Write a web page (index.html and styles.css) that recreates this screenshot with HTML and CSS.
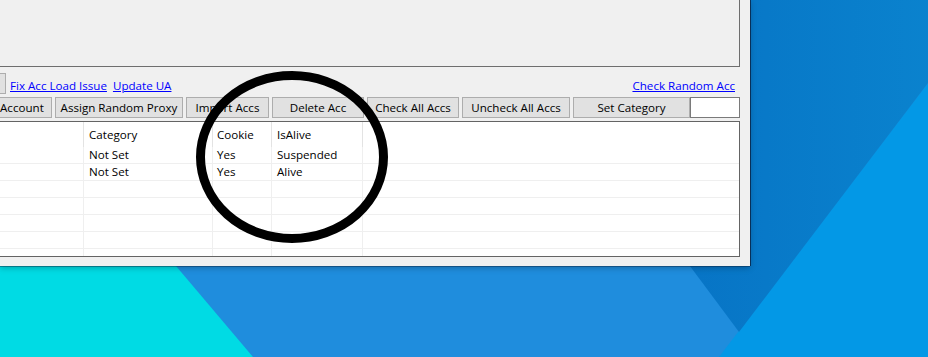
FILE: index.html
```html
<!DOCTYPE html>
<html lang="en">
<head>
<meta charset="utf-8">
<title>Accounts</title>
<link rel="stylesheet" href="styles.css">
</head>
<body>
<div class="desktop">
  <svg class="wallpaper" width="928" height="357" viewBox="0 0 928 357" aria-hidden="true">
    <defs>
      <linearGradient id="band" x1="0" y1="0" x2="1" y2="0">
        <stop offset="0" stop-color="#0568c0"/>
        <stop offset="0.55" stop-color="#0879c8"/>
        <stop offset="1" stop-color="#0b86d0"/>
      </linearGradient>
    </defs>
    <rect x="0" y="0" width="928" height="357" fill="#1f8ddd"/>
    <polygon points="0,58 253,357 0,357" fill="#00dbe4"/>
    <polygon points="928,83 928,357 719,357" fill="#0398e6"/>
    <polygon points="492,0 991,0 739,332" fill="url(#band)"/>
  </svg>

  <div class="window">
    <div class="panel"></div>

    <div class="link-row">
      <button class="btn stub" type="button"></button>
      <a class="link first-link" href="#">Fix Acc Load Issue</a>
      <a class="link" href="#">Update UA</a>
      <a class="link right-link" href="#">Check Random Acc</a>
    </div>

    <div class="btn-row">
      <button class="btn btn-account" type="button">Account</button>
      <button class="btn btn-proxy" type="button">Assign Random Proxy</button>
      <button class="btn btn-import" type="button">Import Accs</button>
      <button class="btn btn-delete" type="button">Delete Acc</button>
      <button class="btn btn-check" type="button">Check All Accs</button>
      <button class="btn btn-uncheck" type="button">Uncheck All Accs</button>
      <button class="btn btn-category" type="button">Set Category</button>
      <input class="textbox" type="text" value="">
    </div>

    <div class="grid">
      <div class="row head">
        <div class="cell"></div>
        <div class="cell">Category</div>
        <div class="cell">Cookie</div>
        <div class="cell">IsAlive</div>
        <div class="cell last"></div>
      </div>
      <div class="row">
        <div class="cell"></div>
        <div class="cell">Not Set</div>
        <div class="cell">Yes</div>
        <div class="cell">Suspended</div>
        <div class="cell last"></div>
      </div>
      <div class="row">
        <div class="cell"></div>
        <div class="cell">Not Set</div>
        <div class="cell">Yes</div>
        <div class="cell">Alive</div>
        <div class="cell last"></div>
      </div>
      <div class="row"><div class="cell"></div><div class="cell"></div><div class="cell"></div><div class="cell"></div><div class="cell last"></div></div>
      <div class="row"><div class="cell"></div><div class="cell"></div><div class="cell"></div><div class="cell"></div><div class="cell last"></div></div>
      <div class="row"><div class="cell"></div><div class="cell"></div><div class="cell"></div><div class="cell"></div><div class="cell last"></div></div>
      <div class="row"><div class="cell"></div><div class="cell"></div><div class="cell"></div><div class="cell"></div><div class="cell last"></div></div>
      <div class="row"><div class="cell"></div><div class="cell"></div><div class="cell"></div><div class="cell"></div><div class="cell last"></div></div>
    </div>

    <svg class="circle" width="194" height="174" viewBox="0 0 194 174" aria-hidden="true">
      <ellipse cx="97" cy="87" rx="91.5" ry="81.5" fill="none" stroke="#000" stroke-width="9"/>
    </svg>
  </div>
</div>
</body>
</html>
```

FILE: styles.css
```css
html, body {
  margin: 0;
  padding: 0;
}

body {
  font-family: "Open Sans", "Noto Sans", sans-serif;
  font-size: 11.6px;
  color: #000;
  background: #1f8ddd;
}

.desktop {
  position: relative;
  width: 928px;
  height: 357px;
  overflow: hidden;
}

.wallpaper {
  position: absolute;
  left: 0;
  top: 0;
}

.window {
  position: relative;
  z-index: 1;
  width: 750px;
  height: 266px;
  box-sizing: border-box;
  padding-right: 10px;
  background: #f0f0f0;
  overflow: hidden;
  display: flex;
  flex-direction: column;
  box-shadow: 1px 0 0 rgba(10, 30, 60, 0.75), 0 1px 0 rgba(10, 30, 60, 0.4), 0 2px 6px rgba(0, 0, 0, 0.25);
}

.panel {
  flex: 0 0 auto;
  height: 77px;
  margin: -10px 0 0 -20px;
  box-sizing: border-box;
  border: 1px solid #6e6e6e;
  background: #f0f0f0;
}

.link-row {
  flex: 0 0 auto;
  height: 30px;
  display: flex;
  align-items: flex-start;
}

.btn {
  box-sizing: border-box;
  height: 21px;
  margin: 0;
  padding: 0;
  border: 1px solid #adadad;
  background: #e1e1e1;
  font-family: inherit;
  font-size: 11.6px;
  line-height: 19px;
  color: #000;
  white-space: nowrap;
  text-align: center;
  flex: 0 0 auto;
}

.stub {
  width: 30px;
  margin-left: -24px;
  margin-top: 6px;
}

.link {
  margin-top: 11px;
  line-height: 16px;
  color: #0000ff;
  text-decoration: underline;
  white-space: nowrap;
  margin-left: 6px;
}

.first-link {
  margin-left: 4px;
}

.right-link {
  margin-left: auto;
  margin-right: 5px;
}

.btn-row {
  flex: 0 0 auto;
  height: 21px;
  display: flex;
  gap: 3px;
}

.btn-account {
  width: 52px;
  border-left: none;
  text-align: right;
  padding-right: 11px;
}

.btn-proxy { width: 128px; }
.btn-import { width: 83px; }
.btn-delete { width: 92px; }
.btn-check { width: 92px; }
.btn-uncheck { width: 108px; }
.btn-category { width: 117px; }

.textbox {
  box-sizing: border-box;
  width: 50px;
  height: 21px;
  margin: 0 0 0 -3px;
  padding: 0 3px;
  border: 1px solid #7a7a7a;
  background: #fff;
  font-family: inherit;
  font-size: 11.6px;
  flex: 0 0 auto;
}

.grid {
  flex: 0 0 auto;
  height: 136px;
  margin: 3px 0 0 -20px;
  box-sizing: border-box;
  border: 1px solid #646464;
  background: #fff;
  overflow: hidden;
}

.row {
  display: grid;
  grid-template-columns: 103px 129px 59px 91px 1fr;
  height: 17px;
  box-sizing: border-box;
  border-bottom: 1px solid #efefef;
}

.row.head {
  height: 25px;
  border-bottom: none;
}

.cell {
  box-sizing: border-box;
  border-right: 1px solid #efefef;
  padding-left: 5px;
  line-height: 16px;
  white-space: nowrap;
  overflow: hidden;
}

.cell:nth-child(3) {
  padding-left: 4px;
}

.head .cell {
  line-height: 25px;
  border-right-color: #e3e3e3;
}

.cell.last {
  border-right: none;
}

.circle {
  position: absolute;
  left: 195px;
  top: 70px;
}
```
